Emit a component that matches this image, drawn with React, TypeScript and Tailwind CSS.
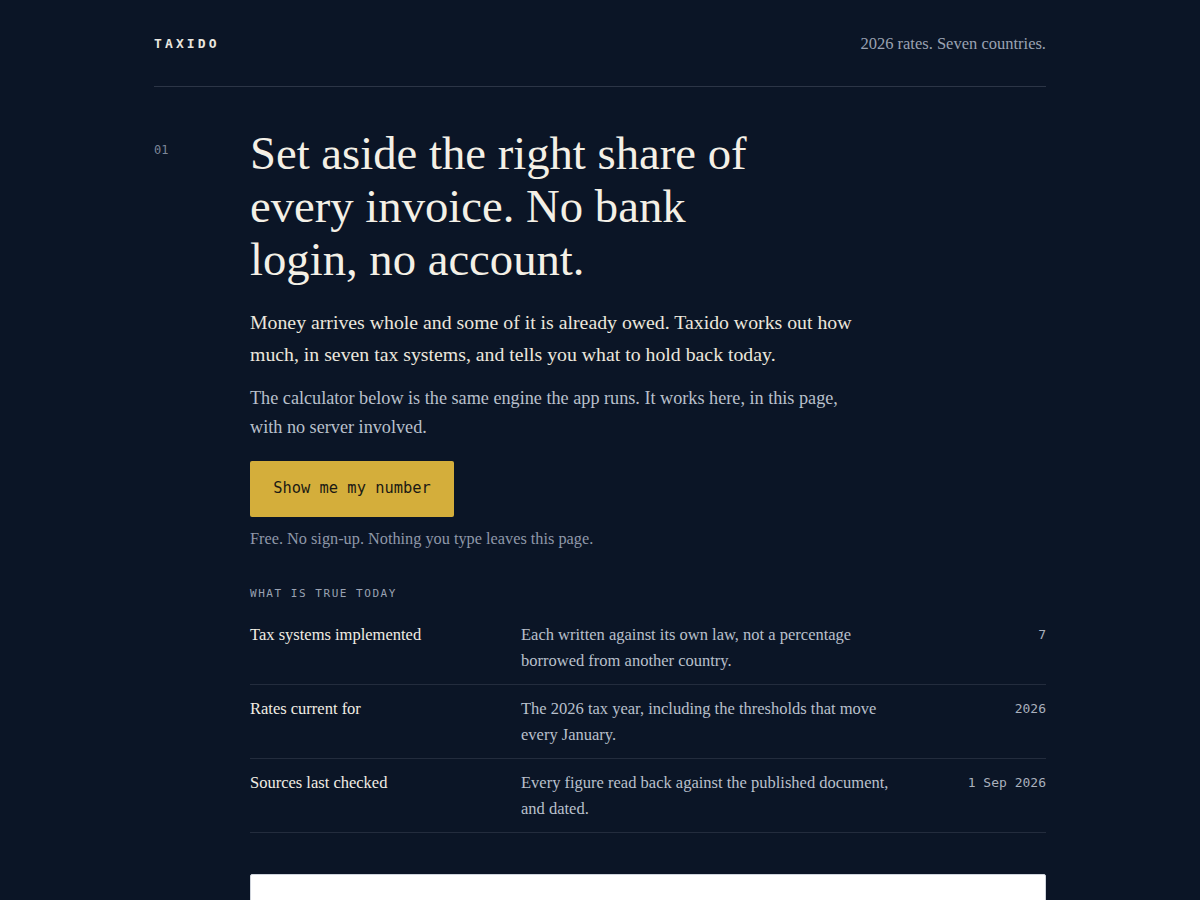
const serif = "font-['Liberation_Serif','Times_New_Roman',serif]";
const mono = "font-['DejaVu_Sans_Mono','Liberation_Mono',monospace]";

const facts = [
  {
    label: "Tax systems implemented",
    text: "Each written against its own law, not a percentage borrowed from another country.",
    value: "7",
  },
  {
    label: "Rates current for",
    text: "The 2026 tax year, including the thresholds that move every January.",
    value: "2026",
  },
  {
    label: "Sources last checked",
    text: "Every figure read back against the published document, and dated.",
    value: "1 Sep 2026",
  },
];

export default function App() {
  return (
    <div className={`min-h-[900px] w-full overflow-hidden bg-[#0b1526] ${serif}`}>
      <div className="mx-auto w-[892px]">
        {/* Header */}
        <header className="flex items-center justify-between border-b border-[#2c3546] pt-[34px] pb-[32px]">
          <span className={`${mono} text-[13px] font-bold leading-5 tracking-[0.24em] text-[#e9e6df]`}>
            TAXIDO
          </span>
          <span className="text-[16.5px] leading-5 text-[#9aa2b2]">2026 rates. Seven countries.</span>
        </header>

        {/* Hero */}
        <section className="flex pt-[40px]">
          <div className={`${mono} w-[96px] shrink-0 pt-[15px] text-[12px] leading-4 text-[#7d8698]`}>01</div>
          <div className="flex-1">
            <h1 className="whitespace-nowrap text-[46.7px] font-normal leading-[53px] text-[#f4f0e6]">
              Set aside the right share of
              <br />
              every invoice. No bank
              <br />
              login, no account.
            </h1>
            <p className="mt-[20px] whitespace-nowrap text-[19.8px] leading-[32px] text-[#ebe7dd]">
              Money arrives whole and some of it is already owed. Taxido works out how
              <br />
              much, in seven tax systems, and tells you what to hold back today.
            </p>
            <p className="mt-[14px] whitespace-nowrap text-[18.2px] leading-[29px] text-[#b9c0cc]">
              The calculator below is the same engine the app runs. It works here, in this page,
              <br />
              with no server involved.
            </p>
            <button
              className={`${mono} mt-[19px] h-[56px] w-[204px] rounded-[2px] bg-[#d4ae3b] text-[15.4px] text-[#1b1a14]`}
            >
              Show me my number
            </button>
            <p className="mt-[11px] text-[16.3px] leading-[22px] text-[#8f98a9]">
              Free. No sign-up. Nothing you type leaves this page.
            </p>

            <div className={`${mono} mt-[36px] mb-[9px] text-[11px] leading-4 tracking-[0.14em] text-[#9aa2b2]`}>
              WHAT IS TRUE TODAY
            </div>
            <div>
              {facts.map((f) => (
                <div
                  key={f.label}
                  className="grid grid-cols-[271px_385px_1fr] border-b border-[#232c3d] pt-[11px] pb-[10px]"
                >
                  <div className="text-[16.5px] leading-[26px] text-[#f1ede4]">{f.label}</div>
                  <div className="text-[16.5px] leading-[26px] text-[#b9c0cc]">{f.text}</div>
                  <div className={`${mono} text-right text-[13px] leading-[26px] text-[#a9b0bd]`}>{f.value}</div>
                </div>
              ))}
            </div>

            <div className="mt-[41px] h-[200px] rounded-t-[2px] border border-[#cfd4dc] bg-white" />
          </div>
        </section>
      </div>
    </div>
  );
}
